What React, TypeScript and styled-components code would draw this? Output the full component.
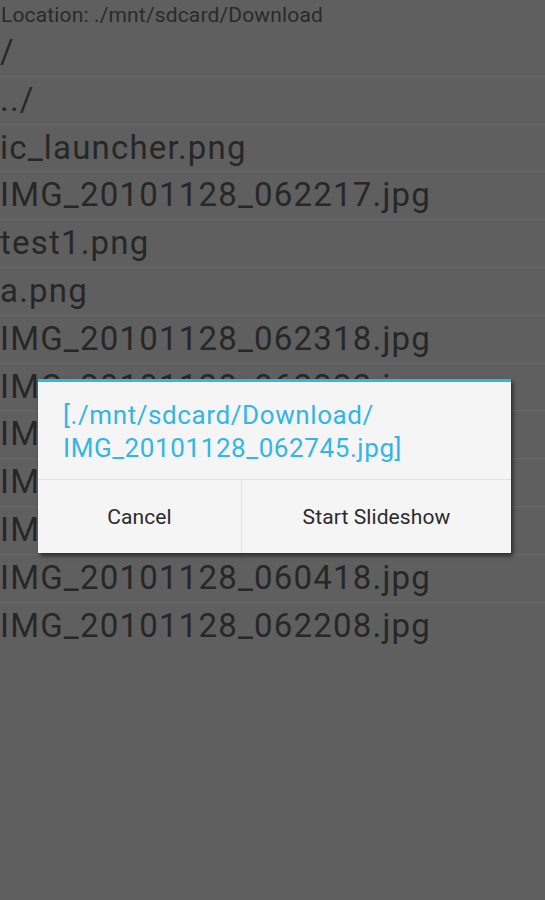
import React from "react";
import styled, { createGlobalStyle } from "styled-components";

const Global = createGlobalStyle`
  html, body { margin: 0; padding: 0; background: #5f5f5f; }
  body { font-family: Roboto, "Noto Sans", sans-serif; }
`;

const Screen = styled.div`
  position: relative;
  width: 545px;
  height: 900px;
  background: #5f5f5f;
  overflow: hidden;
`;

const Location = styled.div`
  height: 28px;
  line-height: 28px;
  font-size: 21px;
  letter-spacing: 0.15px;
  color: #2a2a2a;
  padding-left: 1px;
  margin-top: 1px;
`;

const List = styled.div`
  display: flex;
  flex-direction: column;
`;

const Row = styled.div`
  height: 46.8px;
  line-height: 46px;
  border-bottom: 1px solid #686868;
  font-size: 33px;
  letter-spacing: 1.2px;
  color: #272727;
  white-space: nowrap;

  &:last-child {
    border-bottom-color: transparent;
  }
`;

const Dialog = styled.div`
  position: absolute;
  left: 38px;
  top: 379px;
  width: 473px;
  background: #f5f5f5;
  border-top: 3px solid #33b5e5;
  box-shadow: 2px 3px 4px rgba(0, 0, 0, 0.55);
  display: flex;
  flex-direction: column;
`;

const Title = styled.div`
  padding: 17px 24px 0 25px;
  height: 98px;
  box-sizing: border-box;
  font-size: 26px;
  letter-spacing: 0.6px;
  line-height: 33px;
  color: #33b5e5;
  border-bottom: 1px solid #e2e2e2;
`;

const Buttons = styled.div`
  display: grid;
  grid-template-columns: 204px 1fr;
  height: 73px;
`;

const Button = styled.div<{ $divider?: boolean }>`
  display: flex;
  align-items: center;
  justify-content: center;
  font-size: 21px;
  letter-spacing: 0.1px;
  color: #2b2b2b;
  border-right: ${(p) => (p.$divider ? "1px solid #e2e2e2" : "none")};
`;

const files = [
  "/",
  "../",
  "ic_launcher.png",
  "IMG_20101128_062217.jpg",
  "test1.png",
  "a.png",
  "IMG_20101128_062318.jpg",
  "IMG_20101128_062332.jpg",
  "IMG_20101128_062745.jpg",
  "IMG_20101128_062755.jpg",
  "IMG_20101128_062801.jpg",
  "IMG_20101128_060418.jpg",
  "IMG_20101128_062208.jpg",
];

export default function App() {
  return (
    <Screen>
      <Global />
      <Location>Location: ./mnt/sdcard/Download</Location>
      <List>
        {files.map((f, i) => (
          <Row key={i}>{f}</Row>
        ))}
      </List>
      <Dialog>
        <Title>
          [./mnt/sdcard/Download/
          <br />
          IMG_20101128_062745.jpg]
        </Title>
        <Buttons>
          <Button $divider>Cancel</Button>
          <Button>Start Slideshow</Button>
        </Buttons>
      </Dialog>
    </Screen>
  );
}
